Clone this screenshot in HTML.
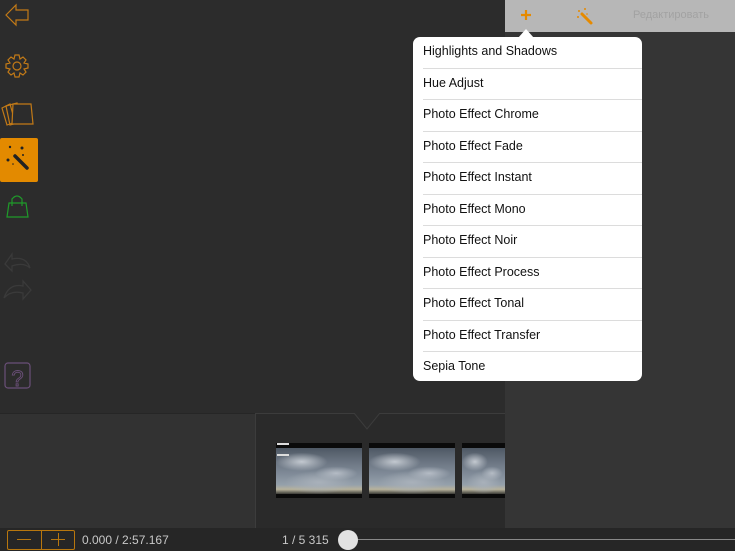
<!DOCTYPE html>
<html><head><meta charset="utf-8"><style>
*{margin:0;padding:0;box-sizing:border-box}
body{width:735px;height:551px;overflow:hidden;background:#2c2c2c;font-family:"Liberation Sans",sans-serif;position:relative}
.abs{position:absolute}
#right{left:505px;top:32px;width:230px;height:496px;background:#353535}
#topbar{left:505px;top:0;width:230px;height:32px;background:#b7b7b7}
#bl{left:0;top:413px;width:255px;height:115px;background:#323232;border-top:1px solid #262626}
#tl{left:255px;top:413px;width:250px;height:115px;background:#2a2a2a;border-top:1px solid #3c3c3c;border-left:1px solid #3c3c3c}
#bottom{left:0;top:528px;width:735px;height:23px;background:#262626}
.menu{left:413px;top:37px;width:229px;height:344px;background:#fff;border-radius:7px;overflow:hidden}
.menu div{height:31.5px;line-height:29px;font-size:12.5px;color:#111;padding-left:10px;position:relative}
.menu div:after{content:"";position:absolute;left:10px;right:0;bottom:0;height:1px;background:#dcdcdc}
.menu div:last-child:after{display:none}
.thumb{top:443px;width:86px;height:55px;background:#0a0a0a}
.thumb i{position:absolute;left:0;right:0;top:5px;bottom:4px;background:
radial-gradient(ellipse 30% 20% at 30% 30%,#c3c9d0,transparent),
radial-gradient(ellipse 25% 15% at 70% 55%,#b5bcc5,transparent),
radial-gradient(ellipse 40% 25% at 50% 75%,#a9b1ba,transparent),
linear-gradient(180deg,#4e5864 0%,#6b7582 30%,#7f8a97 55%,#95a0ab 80%,#b8b39c 90%,#3a3a36 100%)}
</style></head><body>
<div class="abs" id="right"></div>
<div class="abs" id="topbar">
 <svg class="abs" style="left:15px;top:9px" width="12" height="12"><path d="M6 1V11M1 6H11" stroke="#e68a00" stroke-width="2.2"/></svg>
 <svg class="abs" style="left:70px;top:6px" width="20" height="20" viewBox="0 0 20 20"><path d="M7 8 L16 17" stroke="#e68a00" stroke-width="3" stroke-linecap="round"/><g fill="#e68a00"><circle cx="4" cy="5" r="1"/><circle cx="10" cy="3" r="1"/><circle cx="3" cy="11" r="1"/><circle cx="12" cy="8" r="0.8"/></g></svg>
 <span class="abs" style="left:128px;top:9px;font-size:11px;color:#a2a2a2">Редактировать</span>
</div>
<svg class="abs" style="left:518px;top:29px" width="16" height="9"><path d="M0 9 L8 0 L16 9Z" fill="#fff"/></svg>
<div class="abs menu">
<div>Highlights and Shadows</div><div>Hue Adjust</div><div>Photo Effect Chrome</div><div>Photo Effect Fade</div><div>Photo Effect Instant</div><div>Photo Effect Mono</div><div>Photo Effect Noir</div><div>Photo Effect Process</div><div>Photo Effect Tonal</div><div>Photo Effect Transfer</div><div>Sepia Tone</div>
</div>
<svg class="abs" style="left:0;top:0" width="40" height="400" viewBox="0 0 40 400">
 <path d="M6 15 L16 5 L16 10 L28 10 L28 20 L16 20 L16 25 Z" fill="none" stroke="#c27a17" stroke-width="1.2"/>
 <g transform="translate(17,66)" fill="none" stroke="#c27a17" stroke-width="1.2"><circle r="4"/><path d="M-2 -11 L2 -11 L3 -7 L6 -9 L9 -6 L7 -3 L11 -2 L11 2 L7 3 L9 6 L6 9 L3 7 L2 11 L-2 11 L-3 7 L-6 9 L-9 6 L-7 3 L-11 2 L-11 -2 L-7 -3 L-9 -6 L-6 -9 L-3 -7 Z"/></g>
 <g fill="none" stroke="#c27a17" stroke-width="1.2"><path d="M2 108 L10 104 L15 122 L7 125 Z"/><path d="M6 106 L17 103 L21 122 L10 125Z"/><path d="M13 104 L31 104 L33 124 L12 124 Z" fill="#2c2c2c"/></g>
 <rect x="0" y="138" width="38" height="44" rx="2" fill="#e38a00"/>
 <path d="M15 156 L27 168" stroke="#222" stroke-width="3.5" stroke-linecap="round"/>
 <g fill="#222"><circle cx="10" cy="147" r="1.2"/><circle cx="22" cy="148" r="1.5"/><circle cx="8" cy="160" r="1.5"/><circle cx="23" cy="155" r="1"/><circle cx="13" cy="164" r="0.8"/></g>
 <g fill="none" stroke="#1f9a2a" stroke-width="1.2"><path d="M7 217 L9 203 L26 203 L28 217 Z"/><path d="M12 206 L12 199 Q17 193 22 199 L22 206"/></g>
 <g fill="none" stroke="#3a3a3a" stroke-width="1.3"><path d="M5 264 L12 254 L12 259 Q26 256 30 268 Q24 262 12 266 L12 271 Z"/><path d="M31 290 L23 281 L23 286 Q9 283 4 298 Q11 290 23 293 L23 299 Z"/></g>
 <rect x="5" y="363" width="25" height="25" rx="3" fill="none" stroke="#6a4f78" stroke-width="1.2"/>
 <text x="17.5" y="386" font-size="22" fill="none" stroke="#6a4f78" stroke-width="0.9" text-anchor="middle" font-family="Liberation Sans">?</text>
</svg>
<div class="abs" id="bl"></div>
<div class="abs" id="tl"></div>
<svg class="abs" style="left:350px;top:412px" width="30" height="22"><path d="M4 1 L17 17 L30 1" fill="#2c2c2c" stroke="#3c3c3c"/><rect x="0" y="0" width="30" height="1" fill="#2c2c2c"/></svg>
<div class="abs thumb" style="left:276px"><i></i></div>
<div class="abs thumb" style="left:369px"><i></i></div>
<div class="abs thumb" style="left:462px;width:43px"><i></i></div>
<div class="abs" style="left:277px;top:443px;width:12px;height:2px;background:#ddd"></div>
<div class="abs" style="left:277px;top:454px;width:12px;height:2px;background:#ddd"></div>
<div class="abs" id="bottom">
 <div class="abs" style="left:7px;top:2px;width:68px;height:20px;border:1px solid #b8770e;border-radius:2px"></div>
 <div class="abs" style="left:41px;top:2px;width:1px;height:20px;background:#b8770e"></div>
 <div class="abs" style="left:17px;top:11px;width:14px;height:1px;background:#b8770e"></div>
 <div class="abs" style="left:51px;top:11px;width:14px;height:1px;background:#b8770e"></div>
 <div class="abs" style="left:57.5px;top:5px;width:1px;height:13px;background:#b8770e"></div>
 <span class="abs" style="left:82px;top:5px;font-size:12px;color:#c8c8c8">0.000 / 2:57.167</span>
 <span class="abs" style="left:282px;top:5px;font-size:12px;color:#c8c8c8">1 / 5 315</span>
 <div class="abs" style="left:350px;top:11px;width:385px;height:1px;background:#888"></div>
 <div class="abs" style="left:338px;top:2px;width:20px;height:20px;border-radius:50%;background:#e2e2e2"></div>
</div>
</body></html>
